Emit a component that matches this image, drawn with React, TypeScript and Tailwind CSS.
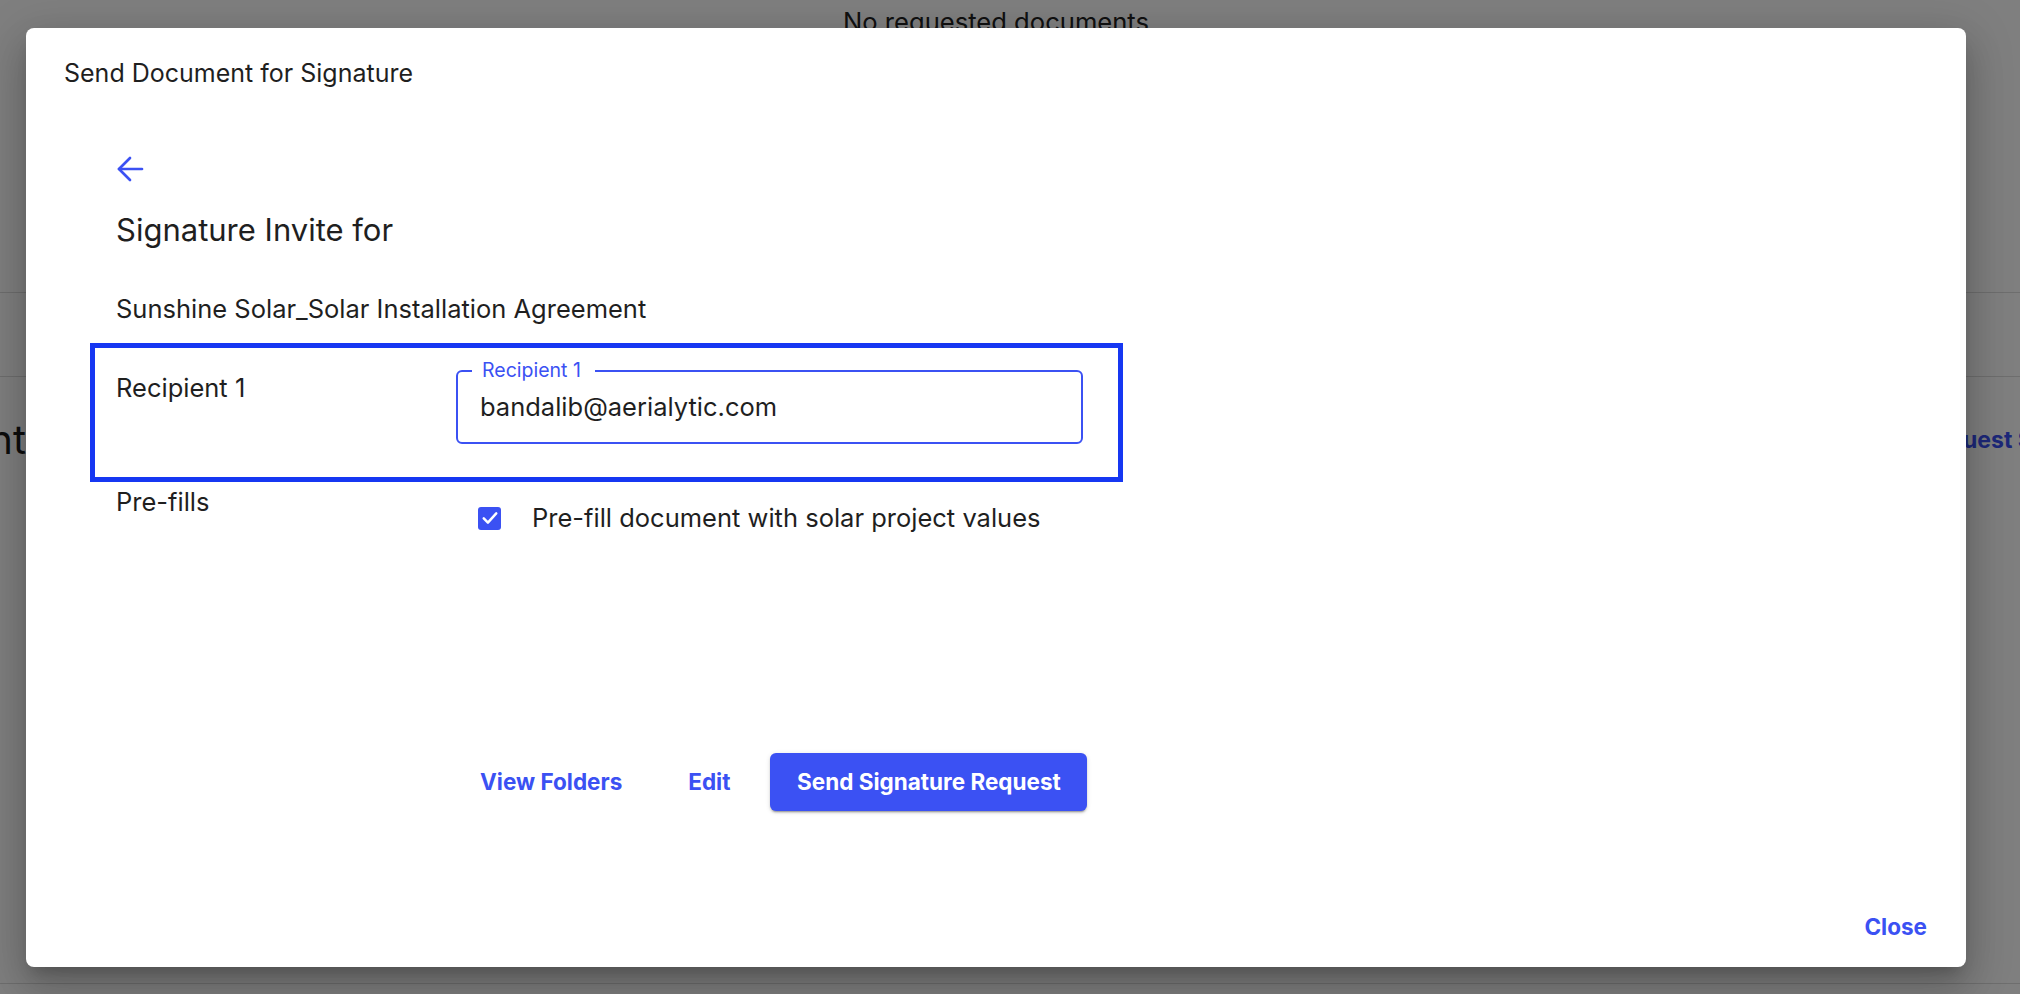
import React from "react";

function BackArrow() {
  return (
    <svg width="28" height="28" viewBox="0 0 28 28" fill="none" stroke="#3b51f3" strokeWidth="2.7" strokeLinecap="round" strokeLinejoin="round">
      <path d="M3 14H26" />
      <path d="M14 3L3 14L14 25" />
    </svg>
  );
}

function CheckBox() {
  return (
    <div className="w-[23px] h-[23px] rounded-[3px] bg-[#3b51f3] flex items-center justify-center">
      <svg width="20" height="20" viewBox="0 0 24 24" fill="none" stroke="white" strokeWidth="3" strokeLinecap="round" strokeLinejoin="round">
        <path d="M4.5 12.5L9.5 17.5L19.5 6.5" />
      </svg>
    </div>
  );
}

export default function App() {
  return (
    <div className="relative w-[2020px] h-[994px] overflow-hidden bg-white font-['Inter',sans-serif]">
      {/* background page */}
      <div className="absolute inset-0 flex flex-col">
        <div className="h-[44px] flex items-center justify-center pr-[28px] text-[25.6px] text-[#222]">
          No requested documents
        </div>
        <div className="h-[248px]" />
        <div className="border-t border-[#dcdcdc]" />
        <div className="h-[83px]" />
        <div className="border-t border-[#dcdcdc]" />
        <div className="flex items-center h-[126px]">
          <div className="w-[26px] shrink-0 overflow-hidden flex justify-end">
            <span className="shrink-0 whitespace-nowrap text-[40px] leading-[50px] text-[#1a1a1a]">
              Document Management
            </span>
          </div>
          <div className="ml-[1894px] shrink-0 whitespace-nowrap text-[23px] font-bold text-[#3b51f3]">
            Request Signature
          </div>
        </div>
        <div className="flex-1" />
        <div className="border-t border-[#dcdcdc] mb-[10px]" />
      </div>

      {/* overlay */}
      <div className="absolute inset-0 bg-black/50" />

      {/* dialog */}
      <div className="absolute left-[26px] top-[28px] w-[1940px] h-[939px] bg-white rounded-[8px] shadow-[0_11px_15px_-7px_rgba(0,0,0,0.2),0_24px_38px_3px_rgba(0,0,0,0.14),0_9px_46px_8px_rgba(0,0,0,0.12)] flex flex-col text-[#1f1f1f]">
        <div className="pl-[38px] pt-[28px] text-[25px] leading-[34px] text-[#1f1f1f]">
          Send Document for Signature
        </div>

        <div className="pl-[90px] flex flex-col">
          <div className="mt-[65px] h-[28px]">
            <BackArrow />
          </div>
          <div className="mt-[27px] text-[31px] leading-[40px]">Signature Invite for</div>
          <div className="mt-[42px] text-[25.5px] leading-[34px]">Sunshine Solar_Solar Installation Agreement</div>

          <div className="mt-[17px] -ml-[26px] w-[1033px] border-[5px] border-[#1637f2] pl-[21px] pt-[22px] pb-[33px] flex items-start">
            <div className="w-[340px] mt-[1px] text-[25.5px] leading-[34px]">Recipient 1</div>
            <div className="relative w-[627px] h-[74px] border-2 border-[#3b51f3] rounded-[6px] flex items-center pl-[22px]">
              <span className="absolute left-[14px] -top-[14px] bg-white pl-[10px] pr-[14px] text-[19.5px] leading-[24px] text-[#3b51f3]">
                Recipient 1
              </span>
              <span className="text-[25.5px] leading-[34px] text-[#1f1f1f]">bandalib@aerialytic.com</span>
            </div>
          </div>

          <div className="mt-[3px] flex items-start">
            <div className="w-[362px] text-[25.5px] leading-[34px]">Pre-fills</div>
            <div className="mt-[16px] flex items-center gap-[31px]">
              <CheckBox />
              <span className="text-[25.5px] leading-[34px]">Pre-fill document with solar project values</span>
            </div>
          </div>

          <div className="mt-[218px] ml-[364px] flex items-center">
            <span className="text-[22.5px] font-bold text-[#3b51f3]">View Folders</span>
            <span className="ml-[66px] text-[22.5px] font-bold text-[#3b51f3]">Edit</span>
            <div className="ml-[40px] w-[317px] h-[58px] rounded-[6px] bg-[#3b51f3] flex items-center justify-center text-[22.5px] font-bold text-white shadow-[0_3px_1px_-2px_rgba(0,0,0,0.2),0_2px_2px_0_rgba(0,0,0,0.14),0_1px_5px_0_rgba(0,0,0,0.12)]">
              Send Signature Request
            </div>
          </div>
        </div>

        <div className="flex-1" />
        <div className="flex justify-end pr-[39px] pb-[25px]">
          <span className="text-[22.5px] leading-[30px] font-bold text-[#3b51f3]">Close</span>
        </div>
      </div>
    </div>
  );
}
